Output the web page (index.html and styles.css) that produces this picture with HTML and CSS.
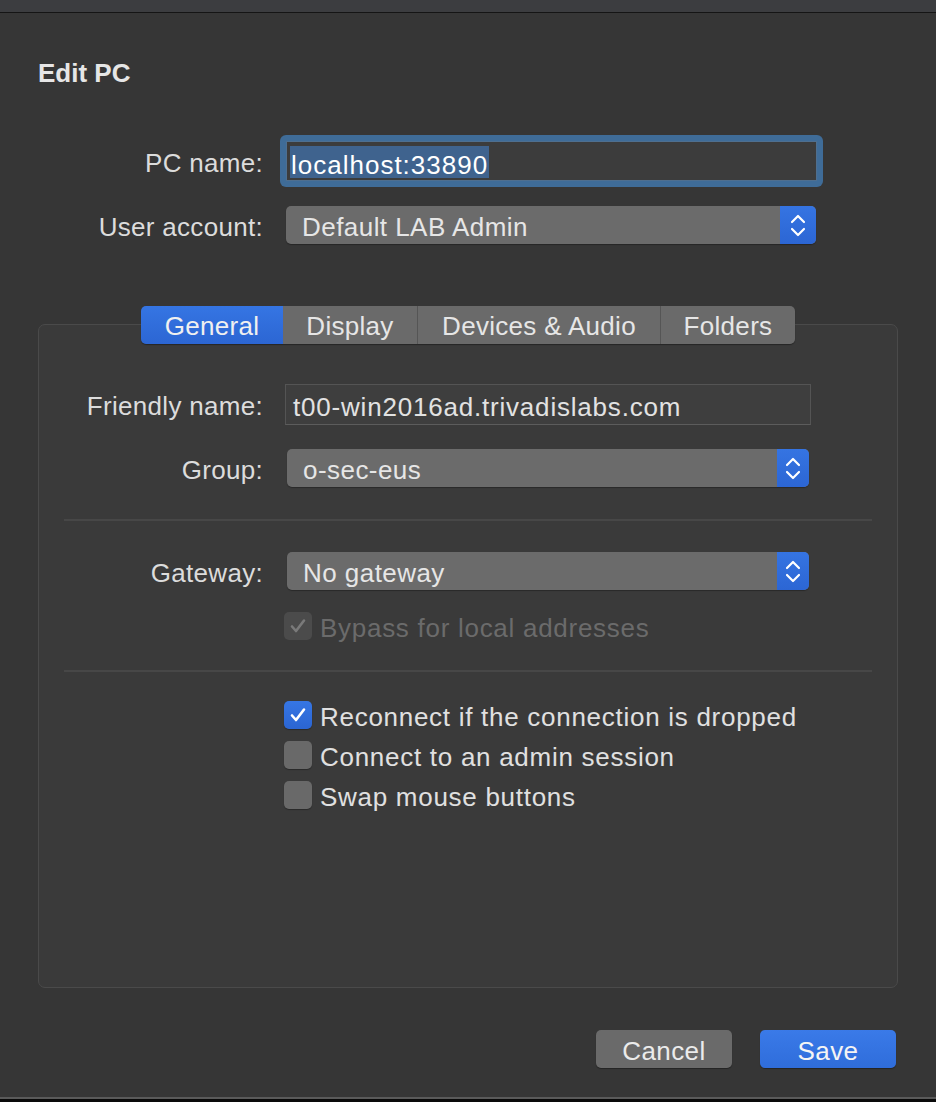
FILE: index.html
```html
<!DOCTYPE html>
<html>
<head>
<meta charset="utf-8">
<link rel="stylesheet" href="styles.css">
</head>
<body>
<div class="titlebar"></div>
<main class="sheet">
  <h1 class="title">Edit PC</h1>
  <div class="form top-form">
    <label class="label">PC name:</label>
    <div class="focus-ring"><div class="field main-field"><span class="selected">localhost:33890</span></div></div>
    <label class="label">User account:</label>
    <div class="popup popup-top"><span class="popup-text">Default LAB Admin</span><span class="stepper"><svg width="36" height="38" viewBox="0 0 36 38"><path d="M12 16 L18 10 L24 16 M12 23 L18 29 L24 23" fill="none" stroke="#fff" stroke-width="2.2" stroke-linecap="round" stroke-linejoin="round"/></svg></span></div>
  </div>

  <section class="groupbox">
    <div class="tabs">
      <div class="tab tab-general active">General</div>
      <div class="tab tab-display">Display</div>
      <div class="tab tab-devices">Devices &amp; Audio</div>
      <div class="tab tab-folders">Folders</div>
    </div>

    <div class="form box-form">
      <label class="label">Friendly name:</label>
      <div class="field friendly-field"><span class="field-text">t00-win2016ad.trivadislabs.com</span></div>
      <label class="label">Group:</label>
      <div class="popup popup-box"><span class="popup-text">o-sec-eus</span><span class="stepper"><svg width="32" height="38" viewBox="0 0 32 38"><path d="M10 16 L16 10 L22 16 M10 23 L16 29 L22 23" fill="none" stroke="#fff" stroke-width="2.2" stroke-linecap="round" stroke-linejoin="round"/></svg></span></div>
    </div>

    <div class="separator sep-1"></div>

    <div class="form box-form gateway-form">
      <label class="label">Gateway:</label>
      <div class="popup popup-box"><span class="popup-text">No gateway</span><span class="stepper"><svg width="32" height="38" viewBox="0 0 32 38"><path d="M10 16 L16 10 L22 16 M10 23 L16 29 L22 23" fill="none" stroke="#fff" stroke-width="2.2" stroke-linecap="round" stroke-linejoin="round"/></svg></span></div>
    </div>
    <div class="check-row bypass disabled">
      <span class="checkbox checked-disabled"><svg width="28" height="28" viewBox="0 0 28 28"><path d="M8 14.5 L12 19 L20 8.5" fill="none" stroke="#7a7a7a" stroke-width="2.6" stroke-linecap="round" stroke-linejoin="round"/></svg></span>
      <span class="check-text">Bypass for local addresses</span>
    </div>

    <div class="separator sep-2"></div>

    <div class="check-list">
      <div class="check-row">
        <span class="checkbox checked"><svg width="28" height="28" viewBox="0 0 28 28"><path d="M8 14.5 L12 19 L20 8.5" fill="none" stroke="#fff" stroke-width="2.6" stroke-linecap="round" stroke-linejoin="round"/></svg></span>
        <span class="check-text">Reconnect if the connection is dropped</span>
      </div>
      <div class="check-row">
        <span class="checkbox"></span>
        <span class="check-text">Connect to an admin session</span>
      </div>
      <div class="check-row">
        <span class="checkbox"></span>
        <span class="check-text">Swap mouse buttons</span>
      </div>
    </div>
  </section>

  <div class="buttons">
    <button class="btn btn-cancel">Cancel</button>
    <button class="btn btn-save">Save</button>
  </div>
</main>
<div class="bottom-edge"></div>
</body>
</html>
```

FILE: styles.css
```css
html, body {
  margin: 0;
  padding: 0;
}
body {
  width: 936px;
  height: 1102px;
  display: flex;
  flex-direction: column;
  background: #363636;
  font-family: "Liberation Sans", Arial, sans-serif;
  color: #dedede;
  overflow: hidden;
}
.titlebar {
  height: 12px;
  background: #3c3d40;
  border-bottom: 1px solid #151515;
  flex: none;
}
.sheet {
  flex: 1;
  padding: 0 38px;
  display: flex;
  flex-direction: column;
}
.title {
  margin: 45px 0 0 0;
  height: 30px;
  line-height: 30px;
  font-size: 26px;
  font-weight: bold;
  color: #e6e6e6;
}
.form {
  display: grid;
  grid-template-columns: 225px auto;
  column-gap: 23px;
  align-items: center;
}
.top-form {
  margin-top: 47px;
  row-gap: 19px;
}
.label {
  font-size: 26px;
  letter-spacing: 0.3px;
  text-align: right;
  color: #dcdcdc;
  white-space: nowrap;
  padding-top: 4px;
}
.focus-ring {
  margin-left: -6px;
  width: 531px;
  padding: 6px;
  background: #3f6c98;
  border-radius: 6px;
}
.main-field {
  height: 40px;
  background: #3c3c3c;
  border: 1px solid #4f6f8f;
  box-sizing: border-box;
  display: flex;
  align-items: center;
  padding-left: 3px;
}
.selected {
  background: #3f638e;
  color: #ffffff;
  font-size: 26px;
  letter-spacing: 1px;
  line-height: 32px;
  height: 32px;
  padding: 3px 1px 0 1px;
  box-sizing: border-box;
  margin-top: 2px;
}
.popup {
  height: 38px;
  background: #6b6b6b;
  border-radius: 5px;
  display: flex;
  align-items: center;
  overflow: hidden;
  box-shadow: 0 1px 1px rgba(0,0,0,0.3);
}
.popup-top {
  width: 530px;
}
.popup-text {
  flex: 1;
  padding-left: 16px;
  padding-top: 4px;
  font-size: 26px;
  letter-spacing: 0.45px;
  color: #e6e6e6;
}
.stepper {
  height: 38px;
  display: flex;
  background: linear-gradient(#3574e2, #2c66d4);
}
.groupbox {
  margin-top: 80px;
  height: 662px;
  border: 1px solid #4a4a4a;
  border-radius: 7px;
  background: #3a3a3a;
  display: flex;
  flex-direction: column;
}
.tabs {
  margin: -19px auto 0 auto;
  height: 38px;
  display: flex;
  border-radius: 5px;
  overflow: hidden;
  box-shadow: 0 1px 1px rgba(0,0,0,0.35);
}
.tab {
  height: 38px;
  line-height: 38px;
  padding-top: 1px;
  font-size: 26px;
  letter-spacing: 0.3px;
  text-align: center;
  background: #6a6a6a;
  color: #e6e6e6;
  box-sizing: border-box;
}
.tab + .tab {
  border-left: 1px solid #555555;
}
.tab.active {
  background: linear-gradient(#3575e3, #2c66d3);
  color: #f0f0f0;
}
.tab-general { width: 142px; }
.tab-display { width: 134px; border-left: none !important; }
.tab-devices { width: 243px; }
.tab-folders { width: 135px; }
.box-form {
  margin-top: 40px;
  row-gap: 24px;
  grid-template-columns: 224px auto;
  column-gap: 22px;
}
.friendly-field {
  width: 526px;
  height: 41px;
  box-sizing: border-box;
  background: #3e3e3e;
  border: 1px solid #545454;
  border-bottom-color: #5c5c5c;
  padding-left: 7px;
  display: flex;
  align-items: center;
}
.field-text {
  font-size: 26px;
  letter-spacing: 0.8px;
  color: #e2e2e2;
  padding-top: 5px;
}
.popup-box {
  width: 522px;
  margin-left: 2px;
}
.separator {
  height: 2px;
  background: #474747;
  margin: 0 25px;
}
.sep-1 { margin-top: 32px; }
.gateway-form { margin-top: 31px; }
.check-row {
  display: flex;
  align-items: center;
  height: 28px;
  padding-left: 245px;
  gap: 8px;
}
.bypass {
  margin-top: 22px;
}
.sep-2 { margin-top: 30px; }
.check-list {
  margin-top: 29px;
  display: flex;
  flex-direction: column;
  gap: 12px;
}
.checkbox {
  width: 28px;
  height: 28px;
  border-radius: 5px;
  background: #696969;
  flex: none;
  display: flex;
  box-shadow: 0 1px 1px rgba(0,0,0,0.3);
}
.checkbox.checked {
  background: linear-gradient(#3676e4, #2b65d2);
}
.checkbox.checked-disabled {
  background: #4b4b4b;
  box-shadow: none;
}
.check-text {
  font-size: 26px;
  letter-spacing: 0.72px;
  color: #e0e0e0;
  white-space: nowrap;
  padding-top: 5px;
}
.disabled .check-text {
  color: #6b6b6b;
}
.buttons {
  margin-top: 42px;
  display: flex;
  justify-content: flex-end;
  gap: 28px;
  padding-right: 2px;
}
.btn {
  width: 136px;
  height: 38px;
  border: none;
  border-radius: 5px;
  font-family: "Liberation Sans", Arial, sans-serif;
  font-size: 26px;
  letter-spacing: 0.4px;
  color: #ebebeb;
  padding: 4px 0 0 0;
  box-shadow: 0 1px 1px rgba(0,0,0,0.35);
}
.btn-cancel {
  background: #6a6a6a;
}
.btn-save {
  background: linear-gradient(#3a7ae8, #2f6ddb);
  color: #f4f4f4;
}
.bottom-edge {
  height: 3px;
  border-top: 2px solid #5a5a5a;
  background: #0a0a0a;
  flex: none;
}
```
